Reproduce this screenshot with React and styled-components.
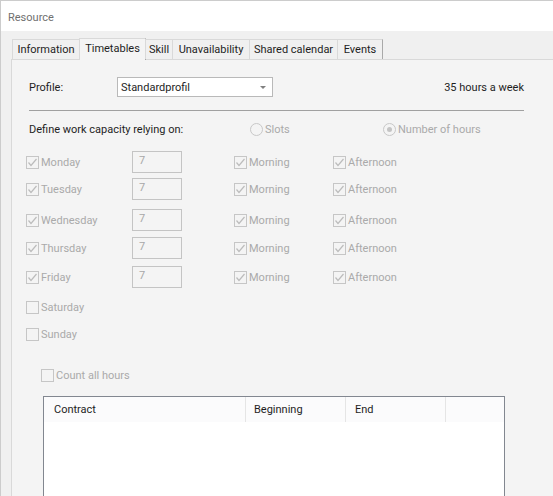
import React from 'react';
import styled, { createGlobalStyle } from 'styled-components';

const GlobalStyle = createGlobalStyle`
  html, body {
    margin: 0;
    padding: 0;
    background: #ffffff;
    overflow: hidden;
  }
  body {
    font-family: Roboto, "Noto Sans", sans-serif;
    font-size: 11px;
    color: #1e1e1e;
  }
`;

const Window = styled.div`
  width: 553px;
  height: 496px;
  box-sizing: border-box;
  border-top: 1px solid #cccccc;
  border-left: 1px solid #cccccc;
  display: flex;
  flex-direction: column;
  overflow: hidden;
`;

const TitleBar = styled.div`
  flex-shrink: 0;
  height: 30px;
  padding: 2px 0 0 7px;
  box-sizing: border-box;
  display: flex;
  align-items: center;
  color: #707070;
  background: #ffffff;
`;

const Body = styled.div`
  flex: 1;
  flex-shrink: 0;
  background: #f0f0f0;
  padding-left: 10px;
  display: flex;
  flex-direction: column;
`;

const TabStrip = styled.div`
  flex-shrink: 0;
  height: 28px;
  display: flex;
  align-items: flex-end;
  padding-left: 1px;
  position: relative;
  z-index: 1;
`;

const Tab = styled.div`
  width: ${p => p.$w}px;
  height: ${p => (p.$active ? 22 : 20)}px;
  box-sizing: border-box;
  display: flex;
  align-items: center;
  justify-content: center;
  padding-bottom: ${p => (p.$active ? 2 : 0)}px;
  border-top: 1px solid #d9d9d9;
  border-left: 1px solid #d9d9d9;
  border-right: 1px solid #a9a9a9;
  background: ${p => (p.$active ? '#f4f4f4' : '#f0f0f0')};
  margin-bottom: ${p => (p.$active ? -1 : 0)}px;
  margin-right: -1px;
  color: #1e1e1e;
  white-space: nowrap;
`;

const Page = styled.div`
  flex: 1;
  flex-shrink: 0;
  width: 600px;
  border: 1px solid #d9d9d9;
  background: #f4f4f4;
  padding: 17px 0 0 17px;
`;

const Content = styled.div`
  width: 495px;
  display: flex;
  flex-direction: column;
`;

const ProfileRow = styled.div`
  height: 20px;
  display: flex;
  align-items: center;
`;

const Label = styled.span`
  width: 88px;
  color: #1e1e1e;
`;

const Select = styled.div`
  width: 156px;
  height: 20px;
  box-sizing: border-box;
  border: 1px solid #b9b9b9;
  background: #ffffff;
  display: flex;
  align-items: center;
  justify-content: space-between;
  padding: 0 6px 0 3px;
`;

const Arrow = styled.span`
  width: 0;
  height: 0;
  border-left: 3px solid transparent;
  border-right: 3px solid transparent;
  border-top: 3px solid #808080;
`;

const Hours = styled.span`
  margin-left: auto;
  color: #1e1e1e;
`;

const Rule = styled.div`
  margin-top: 13px;
  height: 1px;
  background: #a0a0a0;
`;

const DefineRow = styled.div`
  margin-top: 10px;
  height: 16px;
  display: grid;
  grid-template-columns: 221px 133px auto;
  align-items: center;
`;

const Option = styled.div`
  display: flex;
  align-items: center;
  gap: 2px;
  color: #aaaaaa;
  white-space: nowrap;
`;

const Radio = styled.span`
  width: 13px;
  height: 13px;
  box-sizing: border-box;
  border-radius: 50%;
  border: 1px solid #c8c8c8;
  display: flex;
  align-items: center;
  justify-content: center;
  &::after {
    content: '';
    width: 5px;
    height: 5px;
    border-radius: 50%;
    background: ${p => (p.$on ? '#c4c4c4' : 'transparent')};
  }
`;

const Box = styled.span`
  width: 13px;
  height: 13px;
  box-sizing: border-box;
  border: 1px solid #c6c6c6;
  display: flex;
  align-items: center;
  justify-content: center;
  flex-shrink: 0;
`;

const DayRow = styled.div`
  margin-top: ${p => p.$mt}px;
  margin-left: -3px;
  height: 22px;
  display: grid;
  grid-template-columns: 106px 102px 99px auto;
  align-items: center;
`;

const HoursInput = styled.div`
  width: 50px;
  height: 22px;
  box-sizing: border-box;
  border: 1px solid #c4c4c4;
  padding: 1px 0 0 6px;
  color: #a8a8a8;
  line-height: 16px;
`;

const CountRow = styled.div`
  margin-top: 19px;
  margin-left: 12px;
  height: 22px;
  display: flex;
  align-items: center;
`;

const Table = styled.div`
  margin-top: 10px;
  margin-left: 14px;
  width: 462px;
  height: 200px;
  box-sizing: border-box;
  border: 1px solid #828790;
  background: #ffffff;
`;

const HeaderRow = styled.div`
  height: 25px;
  display: grid;
  grid-template-columns: 202px 100px 100px 1fr;
  background: #fbfbfc;
`;

const HeaderCell = styled.div`
  display: flex;
  align-items: center;
  padding-left: ${p => p.$pl}px;
  border-right: ${p => (p.$last ? 'none' : '1px solid #e5e5e5')};
  color: #1e1e1e;
`;

const Check = ({ on }) => (
  <Box>
    {on && (
      <svg width="11" height="11" viewBox="0 0 11 11">
        <polyline points="1.5,5.5 4,8.5 9.5,2" fill="none" stroke="#bcbcbc" strokeWidth="1.2" />
      </svg>
    )}
  </Box>
);

const CheckOption = ({ on, children }) => (
  <Option>
    <Check on={on} />
    <span>{children}</span>
  </Option>
);

const tabs = [
  { label: 'Information', w: 68 },
  { label: 'Timetables', w: 67, active: true },
  { label: 'Skill', w: 28 },
  { label: 'Unavailability', w: 78 },
  { label: 'Shared calendar', w: 89 },
  { label: 'Events', w: 46 },
];

const days = [
  { name: 'Monday', mt: 14, work: true },
  { name: 'Tuesday', mt: 5, work: true },
  { name: 'Wednesday', mt: 9, work: true },
  { name: 'Thursday', mt: 6, work: true },
  { name: 'Friday', mt: 7, work: true },
  { name: 'Saturday', mt: 8 },
  { name: 'Sunday', mt: 5 },
];

export default function App() {
  return (
    <>
      <GlobalStyle />
      <Window>
        <TitleBar>Resource</TitleBar>
        <Body>
          <TabStrip>
            {tabs.map(t => (
              <Tab key={t.label} $w={t.w} $active={t.active}>{t.label}</Tab>
            ))}
          </TabStrip>
          <Page>
            <Content>
              <ProfileRow>
                <Label>Profile:</Label>
                <Select>
                  <span>Standardprofil</span>
                  <Arrow />
                </Select>
                <Hours>35 hours a week</Hours>
              </ProfileRow>
              <Rule />
              <DefineRow>
                <span>Define work capacity relying on:</span>
                <Option><Radio /><span>Slots</span></Option>
                <Option><Radio $on /><span>Number of hours</span></Option>
              </DefineRow>
              {days.map(d => (
                <DayRow key={d.name} $mt={d.mt}>
                  <CheckOption on={d.work}>{d.name}</CheckOption>
                  {d.work ? <HoursInput>7</HoursInput> : <span />}
                  {d.work ? <CheckOption on>Morning</CheckOption> : <span />}
                  {d.work ? <CheckOption on>Afternoon</CheckOption> : <span />}
                </DayRow>
              ))}
              <CountRow>
                <CheckOption>Count all hours</CheckOption>
              </CountRow>
              <Table>
                <HeaderRow>
                  <HeaderCell $pl={10}>Contract</HeaderCell>
                  <HeaderCell $pl={8}>Beginning</HeaderCell>
                  <HeaderCell $pl={9}>End</HeaderCell>
                  <HeaderCell $last />
                </HeaderRow>
              </Table>
            </Content>
          </Page>
        </Body>
      </Window>
    </>
  );
}
